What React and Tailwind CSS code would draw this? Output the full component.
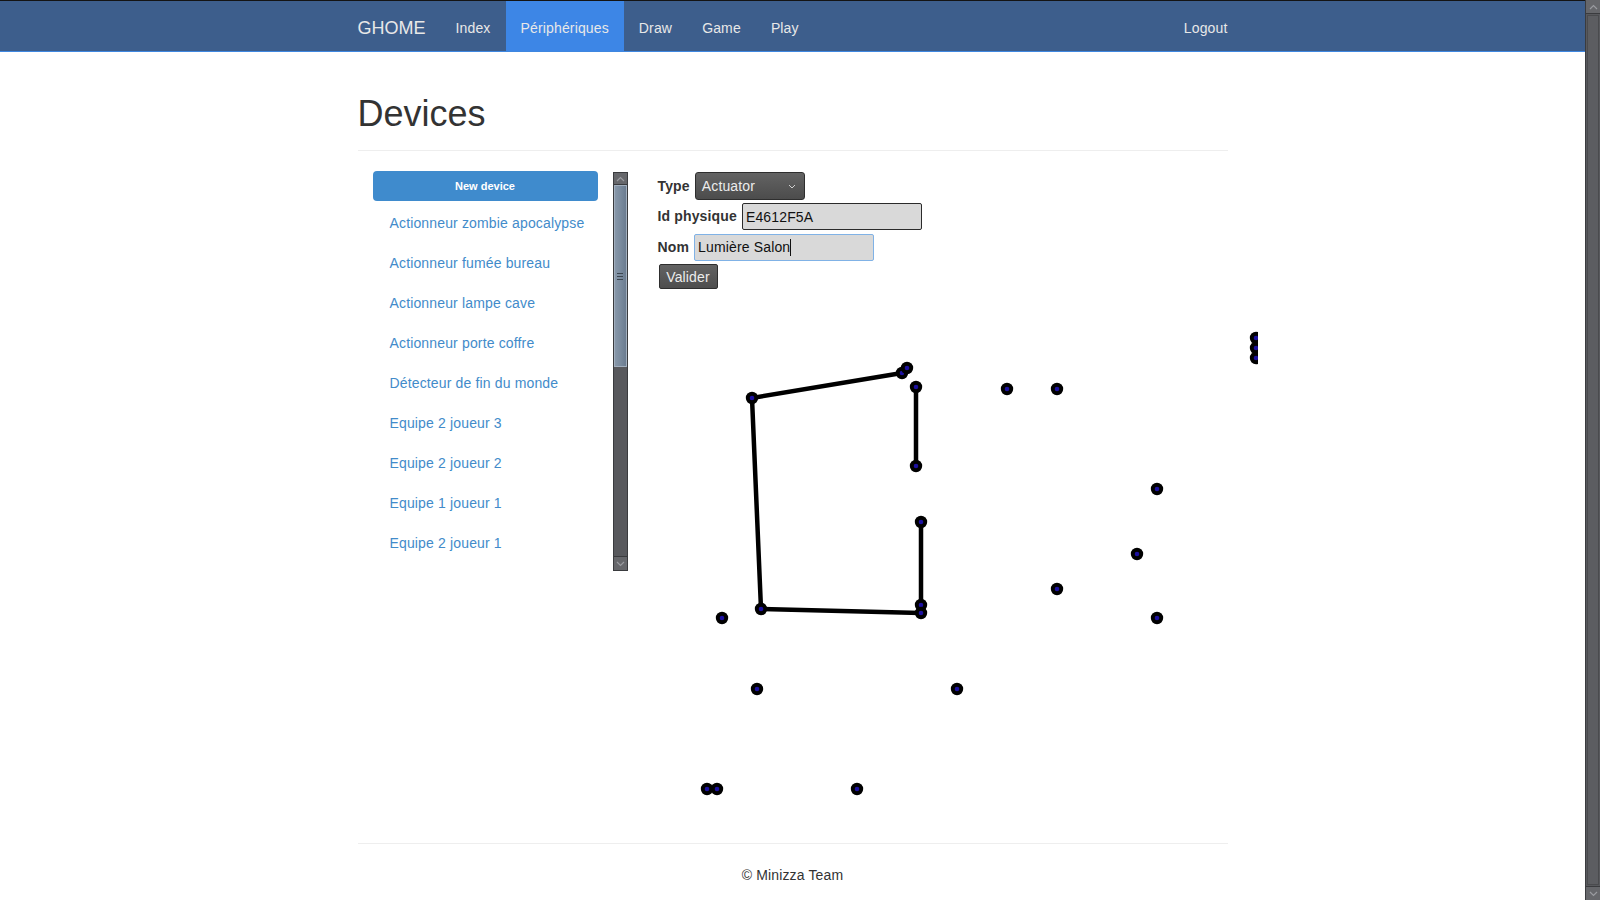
import React from 'react';

const devices = [
  'Actionneur zombie apocalypse',
  'Actionneur fumée bureau',
  'Actionneur lampe cave',
  'Actionneur porte coffre',
  'Détecteur de fin du monde',
  'Equipe 2 joueur 3',
  'Equipe 2 joueur 2',
  'Equipe 1 joueur 1',
  'Equipe 2 joueur 1',
];

const dots = [
  [94, 102], [244, 77], [249, 72], [258, 91], [258, 170], [349, 93], [399, 93],
  [499, 193], [263, 226], [479, 258], [399, 293], [499, 322], [263, 309], [263, 317],
  [103, 313], [64, 322], [99, 393], [299, 393], [49, 493], [59, 493], [199, 493],
  [598, 42], [598, 52], [598, 62],
];

const lines = [
  [94, 102, 244, 77],
  [94, 102, 103, 313],
  [103, 313, 263, 317],
  [258, 91, 258, 170],
  [263, 226, 263, 309],
];

function Chevron({ up }) {
  return (
    <svg width="9" height="6" viewBox="0 0 9 6" className="text-[#9a9ba0]">
      <path d={up ? 'M1 5 L4.5 1.5 L8 5' : 'M1 1 L4.5 4.5 L8 1'} fill="none" stroke="currentColor" strokeWidth="1.2" />
    </svg>
  );
}

function ListScrollbar() {
  return (
    <div className="w-[15px] h-[399px] mt-[1px] flex flex-col bg-[#58595d] border border-[#3a3b3e]">
      <div className="h-[12px] flex items-center justify-center bg-[#66676b] border-b border-[#3a3b3e]">
        <Chevron up />
      </div>
      <div className="h-[182px] flex items-center justify-center bg-gradient-to-r from-[#8797a9] via-[#7a8b9e] to-[#6b7c90] border border-[#a2afbe]">
        <div className="flex flex-col gap-[2px]">
          <div className="w-[6px] h-[1px] bg-[#3d4650]" />
          <div className="w-[6px] h-[1px] bg-[#3d4650]" />
          <div className="w-[6px] h-[1px] bg-[#3d4650]" />
        </div>
      </div>
      <div className="flex-1" />
      <div className="h-[14px] flex items-center justify-center bg-[#66676b] border-t border-[#3a3b3e]">
        <Chevron />
      </div>
    </div>
  );
}

function Canvas() {
  return (
    <svg width="600" height="520" viewBox="0 0 600 520" className="block mt-[7px]">
      {lines.map(([x1, y1, x2, y2], i) => (
        <line key={i} x1={x1} y1={y1} x2={x2} y2={y2} stroke="#000" strokeWidth="4.5" strokeLinecap="round" />
      ))}
      {dots.map(([x, y], i) => (
        <g key={i}>
          <circle cx={x} cy={y} r="6.2" fill="#000" />
          <circle cx={x} cy={y} r="2.3" fill="#1c10a0" />
        </g>
      ))}
    </svg>
  );
}

export default function App() {
  return (
    <div className="flex h-[900px] overflow-hidden bg-white text-[#333] tracking-[0.15px] font-['Liberation_Sans',Arial,sans-serif]">
      <div className="flex-1 min-w-0 flex flex-col">
        {/* Navbar */}
        <nav className="h-[52px] bg-[#3d5e8c] border-t border-[#141414] border-b border-b-[#3f87e0]">
          <div className="w-[870px] mx-auto h-[50px] flex items-stretch text-[14px] text-[#e8e8e8]">
            <a className="flex items-center pt-[4px] pr-[15px] text-[18px] tracking-normal">GHOME</a>
            <a className="flex items-center pt-[4px] px-[15px]">Index</a>
            <a className="flex items-center pt-[4px] px-[15px] bg-[#3d86e6]">Périphériques</a>
            <a className="flex items-center pt-[4px] px-[15px]">Draw</a>
            <a className="flex items-center pt-[4px] px-[15px]">Game</a>
            <a className="flex items-center pt-[4px] px-[15px]">Play</a>
            <a className="flex items-center pt-[4px] pl-[15px] ml-auto">Logout</a>
          </div>
        </nav>

        <div className="w-[870px] mx-auto">
          {/* Page header */}
          <div className="mt-[42px] pb-[16px] border-b border-[#eee]">
            <h1 className="text-[36px] leading-[40px] font-normal tracking-normal text-[#333]">Devices</h1>
          </div>

          <div className="flex mt-[20px]">
            {/* Device list */}
            <div className="w-[270px] flex items-start">
              <div className="w-[255px] h-[400px] px-[15px] overflow-hidden">
                <button className="w-full h-[30px] rounded-[4px] bg-[#3f8bcd] text-white text-[11px] font-bold tracking-normal">
                  New device
                </button>
                <ul className="mt-[2px]">
                  {devices.map((d) => (
                    <li key={d} className="h-[40px] flex items-center px-[17px] text-[14px] text-[#428bca] whitespace-nowrap">
                      {d}
                    </li>
                  ))}
                </ul>
              </div>
              <ListScrollbar />
            </div>

            {/* Form + canvas */}
            <div className="ml-[30px] flex flex-col">
              <div className="flex flex-col mt-[1px] text-[14px]">
                <div className="flex items-center gap-[5px] h-[28px]">
                  <label className="font-bold text-[#333]">Type</label>
                  <div className="w-[110px] h-[28px] flex items-center justify-between pl-[6px] pr-[8px] rounded-[3px] border border-[#2e2e2e] bg-gradient-to-b from-[#636363] to-[#4c4c4c] text-[#ececec]">
                    <span>Actuator</span>
                    <svg width="8" height="5" viewBox="0 0 8 5">
                      <path d="M1 1 L4 4 L7 1" fill="none" stroke="#cfcfcf" strokeWidth="1" />
                    </svg>
                  </div>
                </div>
                <div className="flex items-center gap-[5px] h-[27px] mt-[3px]">
                  <label className="font-bold text-[#333]">Id physique</label>
                  <input
                    readOnly
                    value="E4612F5A"
                    className="w-[180px] h-[27px] px-[3px] rounded-[2px] border border-[#2b2b2b] bg-[#d9d9d9] text-[#111] text-[14px] tracking-[0.15px] outline-none font-['Liberation_Sans',Arial,sans-serif]"
                  />
                </div>
                <div className="flex items-center gap-[5px] h-[27px] mt-[4px]">
                  <label className="font-bold text-[#333]">Nom</label>
                  <div className="w-[180px] h-[27px] px-[3px] flex items-center rounded-[2px] border border-[#80b2e6] bg-[#d9d9d9] text-[#111]">
                    <span>Lumière Salon</span>
                    <span className="w-[1px] h-[17px] bg-[#111]" />
                  </div>
                </div>
                <div className="h-[25px] flex mt-[3px]">
                  <button className="w-[59px] h-[25px] pt-[1px] rounded-[2px] border border-[#2e2e2e] bg-gradient-to-b from-[#636363] to-[#4e4e4e] text-[#ececec] text-[14px] ml-[1px]">
                    Valider
                  </button>
                </div>
              </div>
              <Canvas />
            </div>
          </div>

          {/* Footer */}
          <footer className="mt-[27px] border-t border-[#eee] pt-[21px] text-center text-[14px] leading-[20px] text-[#333]">
            © Minizza Team
          </footer>
        </div>
      </div>

      {/* Page scrollbar */}
      <div className="w-[15px] h-full flex flex-col bg-[#58595d] border-l border-[#3a3b3e]">
        <div className="h-[14px] flex items-center justify-center bg-[#66676b] border-b border-[#3a3b3e]">
          <Chevron up />
        </div>
        <div className="flex-1 m-[1px] bg-[#5c5d61] border border-[#4a4b4e]" />
        <div className="h-[14px] flex items-center justify-center bg-[#66676b] border-t border-[#3a3b3e]">
          <Chevron />
        </div>
      </div>
    </div>
  );
}
